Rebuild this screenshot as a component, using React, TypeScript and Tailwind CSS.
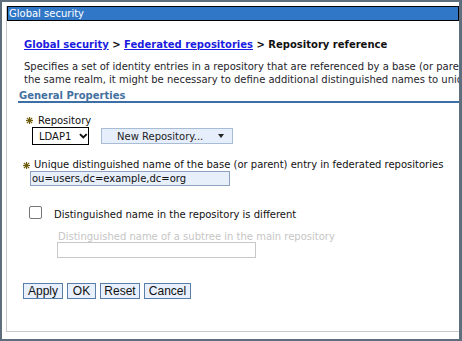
import React from "react";

const F = { fontFamily: '"DejaVu Sans", Verdana, sans-serif' };

function Star({ className = "" }: { className?: string }) {
  return (
    <svg width="7" height="7" viewBox="0 0 7 7" className={className}>
      <g stroke="#6e5e0c" strokeWidth="1.2" strokeLinecap="square">
        <line x1="3.5" y1="0.5" x2="3.5" y2="6.5" />
        <line x1="0.5" y1="3.5" x2="6.5" y2="3.5" />
        <line x1="1.3" y1="1.3" x2="5.7" y2="5.7" />
        <line x1="5.7" y1="1.3" x2="1.3" y2="5.7" />
      </g>
    </svg>
  );
}

export default function App() {
  return (
    <div
      className="w-[462px] h-[341px] bg-[#5e6e7c] pt-[2px] pl-[2px] pr-[3px] pb-[2px] overflow-hidden"
      style={F}
    >
      <div className="bg-white h-full pt-[4px] pl-[4px] pr-0 pb-[7px]">
        <div className="h-full border-l border-b border-[#c8c8c8] overflow-hidden flex flex-col">
          {/* title bar */}
          <div className="h-[15px] border border-black bg-[#3177c7] text-white text-[10px] leading-[13px] pl-[1px] whitespace-nowrap">
            Global security
          </div>

          {/* breadcrumb */}
          <div className="mt-[18px] ml-[17px] text-[10px] leading-[12px] font-bold text-[#111] whitespace-nowrap">
            <span className="text-[#1c1ce0] underline">Global security</span>
            {" > "}
            <span className="text-[#1c1ce0] underline">Federated repositories</span>
            {" > Repository reference"}
          </div>

          {/* description */}
          <div className="mt-[9px] ml-[17px] text-[10px] leading-[13px] text-[#1e1e2a] whitespace-nowrap">
            <div>
              Specifies a set of identity entries in a repository that are referenced by a base (or parent) entry into the directory information tree.
            </div>
            <div>
              the same realm, it might be necessary to define additional distinguished names to uniquely identify this set of entries within the realm.
            </div>
          </div>

          {/* General properties */}
          <div className="mt-[4px] ml-[11px] border-b-2 border-[#3d6ea6] pl-[1px] text-[10px] leading-[11px] font-bold text-[#44719f] whitespace-nowrap">
            General Properties
          </div>

          {/* Repository */}
          <div className="mt-[11px] ml-[19px] flex items-center gap-[5px] text-[10px] leading-[13px] text-[#111]">
            <Star />
            <span>Repository</span>
          </div>
          <div className="ml-[25px] flex items-center">
            <div className="h-[18px] w-[57px] border border-black bg-white flex items-center pl-[6px] text-[10px] text-[#111]">
              <span>LDAP1</span>
              <svg width="9" height="6" viewBox="0 0 9 6" className="ml-[8px]">
                <polyline points="1,1 4.5,4.5 8,1" fill="none" stroke="#111" strokeWidth="2" />
              </svg>
            </div>
            <div className="ml-[12px] h-[16px] w-[132px] border border-[#a9bcd6] bg-[#e6eefb] flex items-center text-[10px] text-[#222] pl-[15px]">
              <span>New Repository...</span>
              <svg width="6" height="4" viewBox="0 0 6 4" className="ml-[15px]">
                <polygon points="0,0 6,0 3,4" fill="#222" />
              </svg>
            </div>
          </div>

          {/* Unique DN */}
          <div className="mt-[14px] ml-[16px] flex items-center gap-[4px] text-[10px] leading-[12px] text-[#111] whitespace-nowrap">
            <Star />
            <span>Unique distinguished name of the base (or parent) entry in federated repositories</span>
          </div>
          <div className="ml-[23px] h-[15px] w-[200px] border border-[#8ea2bf] bg-[#e7effb] text-[10px] leading-[13px] text-[#111] pl-[1px] whitespace-nowrap">
            ou=users,dc=example,dc=org
          </div>

          {/* Checkbox */}
          <div className="mt-[18px] ml-[22px] flex items-center text-[10px] leading-[13px] text-[#111] whitespace-nowrap">
            <div className="w-[13px] h-[13px] border border-[#767676] rounded-[2px] bg-white" />
            <span className="ml-[12px] mt-[4px]">Distinguished name in the repository is different</span>
          </div>
          <div className="mt-[10px] ml-[51px] text-[10px] leading-[11px] text-[#c6c6c6] whitespace-nowrap">
            Distinguished name of a subtree in the main repository
          </div>
          <div className="ml-[50px] h-[16px] w-[199px] border border-[#c8c8c8] bg-white" />

          {/* Buttons */}
          <div
            className="mt-[25px] ml-[16px] flex gap-[4px] text-[12px] text-[#111]"
            style={{ fontFamily: '"Liberation Sans", Arial, sans-serif' }}
          >
            <div className="h-[16px] w-[40px] border border-[#5a7eaa] bg-[#e7f0fc] flex items-center justify-center leading-[14px]">Apply</div>
            <div className="h-[16px] w-[29px] border border-[#5a7eaa] bg-[#e7f0fc] flex items-center justify-center leading-[14px]">OK</div>
            <div className="h-[16px] w-[40px] border border-[#5a7eaa] bg-[#e7f0fc] flex items-center justify-center leading-[14px]">Reset</div>
            <div className="h-[16px] w-[47px] border border-[#5a7eaa] bg-[#e7f0fc] flex items-center justify-center leading-[14px]">Cancel</div>
          </div>
        </div>
      </div>
    </div>
  );
}
